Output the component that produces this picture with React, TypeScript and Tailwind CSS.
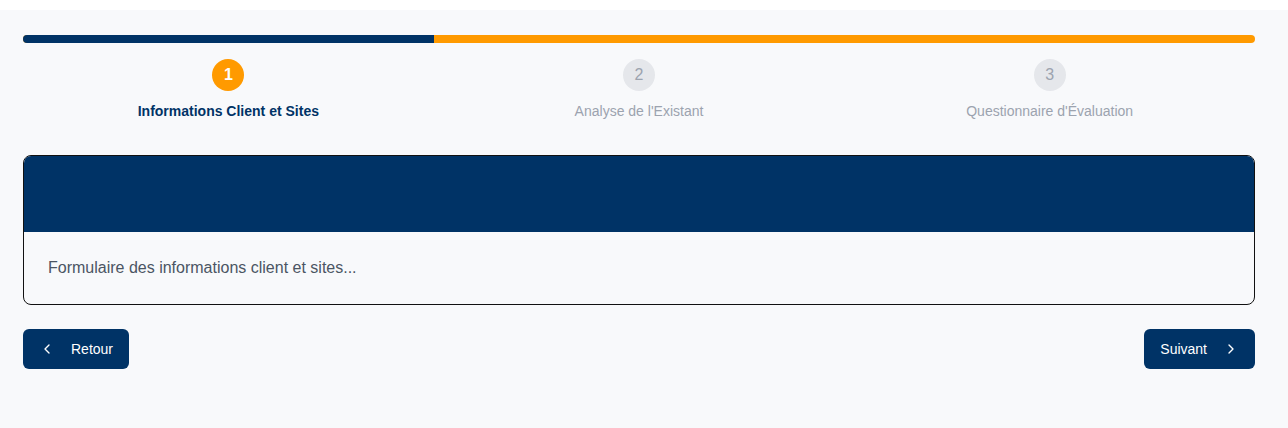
import { ChevronLeft, ChevronRight } from "lucide-react";

const steps = [
  { n: 1, label: "Informations Client et Sites" },
  { n: 2, label: "Analyse de l'Existant" },
  { n: 3, label: "Questionnaire d'Évaluation" },
];

export default function App() {
  const current = 1;
  const progress = (current / steps.length) * 100;

  return (
    <div className="min-h-screen bg-white pt-2.5 font-['Liberation_Sans',Arial,sans-serif]">
      <div className="min-h-[418px] bg-[#f8f9fb] pt-[25px] pr-[33px] pb-10 pl-[23px]">
        {/* Progress bar */}
        <div className="h-2 w-full overflow-hidden rounded-full bg-[#ff9a00]">
          <div className="h-full bg-[#003366]" style={{ width: `${progress}%` }} />
        </div>

        {/* Steps */}
        <div className="mt-4 grid grid-cols-3">
          {steps.map((s) => {
            const active = s.n === current;
            return (
              <div key={s.n} className="flex flex-col items-center">
                <div
                  className={
                    active
                      ? "flex h-8 w-8 items-center justify-center rounded-full bg-[#ff9a00] text-base font-bold text-white"
                      : "flex h-8 w-8 items-center justify-center rounded-full bg-[#e5e7eb] text-base text-[#9ca3af]"
                  }
                >
                  {s.n}
                </div>
                <span
                  className={
                    active
                      ? "mt-2.5 text-sm leading-5 font-bold text-[#003366]"
                      : "mt-2.5 text-sm leading-5 text-[#9ca3af]"
                  }
                >
                  {s.label}
                </span>
              </div>
            );
          })}
        </div>

        {/* Card */}
        <div className="mt-[34px] overflow-hidden rounded-lg border border-[#111] bg-[#f8f9fb]">
          <div className="h-[76px] bg-[#003366]" />
          <div className="p-6">
            <p className="text-base leading-6 text-[#4b5563]">Formulaire des informations client et sites...</p>
          </div>
        </div>

        {/* Navigation */}
        <div className="mt-6 flex items-center justify-between">
          <button className="flex h-10 items-center gap-4 rounded-md bg-[#003366] px-4 text-sm text-white">
            <ChevronLeft size={16} />
            Retour
          </button>
          <button className="flex h-10 items-center gap-4 rounded-md bg-[#003366] px-4 text-sm text-white">
            Suivant
            <ChevronRight size={16} />
          </button>
        </div>
      </div>
    </div>
  );
}
